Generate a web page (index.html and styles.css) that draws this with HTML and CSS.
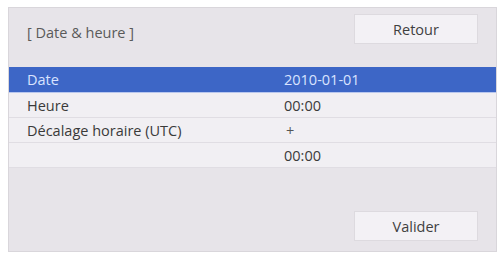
FILE: index.html
```html
<!DOCTYPE html>
<html lang="fr">
<head>
<meta charset="utf-8">
<link rel="stylesheet" href="styles.css">
</head>
<body>
<div class="panel">
  <div class="head">
    <div class="title">[ Date &amp; heure ]</div>
    <div class="btn">Retour</div>
  </div>
  <div class="rows">
    <div class="row sel"><span class="lab">Date</span><span class="val">2010-01-01</span></div>
    <div class="row"><span class="lab">Heure</span><span class="val">00:00</span></div>
    <div class="row"><span class="lab">Décalage horaire (UTC)</span><span class="val plus">+</span></div>
    <div class="row"><span class="lab"></span><span class="val">00:00</span></div>
  </div>
  <div class="foot">
    <div class="btn">Valider</div>
  </div>
</div>
</body>
</html>
```
FILE: styles.css
```css
html, body {
  margin: 0;
  padding: 0;
  background: #ffffff;
}
body {
  padding: 7px 7px 4px 8px;
  font-family: "Open Sans", "Noto Sans", sans-serif;
  font-size: 14.5px;
  color: #3a3a3a;
}
.panel {
  width: 489px;
  height: 245px;
  box-sizing: border-box;
  background: #e7e4e9;
  border: 1px solid #d9d6db;
  display: flex;
  flex-direction: column;
}
.head {
  height: 59px;
  display: flex;
  align-items: flex-start;
  justify-content: space-between;
  padding: 6px 18px 0 18px;
  box-sizing: border-box;
}
.title {
  margin-top: 9px;
  color: #5a5a5a;
}
.btn {
  width: 124px;
  height: 30px;
  box-sizing: border-box;
  background: #f3f1f5;
  border: 1px solid #dddadf;
  display: flex;
  align-items: center;
  justify-content: center;
  color: #3f3f3f;
}
.rows {
  display: flex;
  flex-direction: column;
}
.row {
  height: 25px;
  display: flex;
  align-items: center;
  background: #f1eff3;
  border-bottom: 1px solid #e0dde3;
  box-sizing: border-box;
}
.row.sel {
  height: 26px;
  background: #3d66c6;
  color: #d9e3ff;
  border-bottom: 1px solid #b9c7ee;
}
.lab {
  width: 258px;
  padding-left: 18px;
  box-sizing: border-box;
}
.val {
  padding-left: 17px;
}
.plus {
  padding-left: 19px;
  color: #555;
}
.foot {
  flex: 1;
  display: flex;
  justify-content: flex-end;
  align-items: flex-end;
  padding: 0 18px 10px 0;
}
```
